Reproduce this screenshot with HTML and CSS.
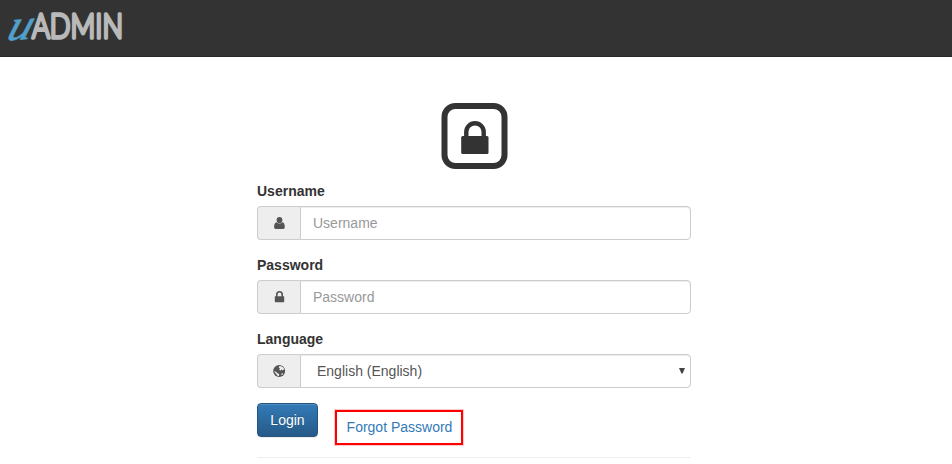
FILE: index.html
```html
<!DOCTYPE html>
<html lang="en">
<head>
<meta charset="utf-8">
<title>uAdmin</title>
<link rel="stylesheet" href="styles.css">
</head>
<body>
<header class="navbar">
  <svg class="logo" width="132" height="56" viewBox="0 0 132 56" role="img" aria-label="uAdmin">
    <text class="logo-u" transform="translate(5.5 40.5) rotate(-4) skewX(-22) scale(1.12 1)" x="0" y="0">u</text>
    <text class="logo-name" x="32" y="38.3" textLength="91" lengthAdjust="spacingAndGlyphs">ADMIN</text>
  </svg>
</header>
<main class="login">
  <svg class="lock" width="67" height="66" viewBox="0 0 67 66">
    <rect x="3.5" y="3" width="60" height="60" rx="11" fill="none" stroke="#333" stroke-width="6"/>
    <path d="M25.3 34v-5.2a8.7 8.5 0 0 1 17.4 0V34" fill="none" stroke="#333" stroke-width="4.4"/>
    <rect x="20.2" y="33" width="27.3" height="18" rx="1.5" fill="#333"/>
  </svg>
  <form>
    <div class="group">
      <label for="username">Username</label>
      <div class="field">
        <span class="addon"><svg width="14" height="14" viewBox="0 0 14 14" fill="#555"><ellipse cx="7.5" cy="4" rx="2.9" ry="3.1"/><path d="M4.7 6.2C2.8 6.7 2.1 8.3 2.1 11c0 1.3.6 2 1.6 2h7.5c1 0 1.6-.7 1.6-2 0-2.7-.7-4.3-2.5-4.8-1.6 1.6-4 1.6-5.6 0z"/></svg></span>
        <input id="username" type="text" placeholder="Username">
      </div>
    </div>
    <div class="group">
      <label for="password">Password</label>
      <div class="field">
        <span class="addon"><svg width="14" height="14" viewBox="0 0 14 14"><path d="M4.8 7V4.4a2.7 2.7 0 0 1 5.4 0V7" fill="none" stroke="#555" stroke-width="1.6"/><rect x="2.8" y="6.2" width="9.4" height="6" rx=".6" fill="#555"/></svg></span>
        <input id="password" type="password" placeholder="Password">
      </div>
    </div>
    <div class="group">
      <label for="language">Language</label>
      <div class="field">
        <span class="addon"><svg width="14" height="14" viewBox="0 0 14 14"><circle cx="7.2" cy="7" r="6" fill="#555"/><path d="M7.1 2.2l2.3.1 2.1 1.5 1 2-1.3-.2-.4 1-1.1-1-1.2 1-1.3-.7.8-1.4-1.2-.8zM2 7.2l2 .5 1.8 1.8 1.4.5-.3 2.1-1.4-.4-1.5-2zM9.2 9.9l1.6-1 .2 1.2-1.2 1.2z" fill="#eee"/></svg></span>
        <div class="select">
          <select id="language"><option>English (English)</option></select>
          <svg class="arrow" width="6" height="6" viewBox="0 0 6 6"><path d="M0 0h6L3.6 5.6H2.4z" fill="#444"/></svg>
        </div>
      </div>
    </div>
    <div class="actions">
      <button class="submit" type="button">Login</button>
      <a class="forgot" href="#">Forgot Password</a>
    </div>
  </form>
  <hr>
</main>
</body>
</html>
```
FILE: styles.css
```css
* { box-sizing: border-box; }
body {
  margin: 0;
  background: #fff;
  color: #333;
  font: 14px/20px "Liberation Sans", Arial, sans-serif;
  overflow: hidden;
}
.navbar { height: 57px; background: #333; border-bottom: 1px solid #292929; }
.logo { display: block; overflow: visible; }
.logo-u {
  font: italic 43px "Liberation Serif", serif;
  fill: #519fcb;
  stroke: #519fcb;
  stroke-width: .7;
}
.logo-name {
  font: 300 32.5px Lato, sans-serif;
  fill: #b9b9b9;
  stroke: #b9b9b9;
  stroke-width: 3.4;
  stroke-linejoin: round;
}
.login { width: 434px; margin: 46px 0 0 257px; }
.lock { display: block; margin: 0 auto 12px; }
.group { margin-bottom: 15px; }
label { display: block; margin-bottom: 5px; font-weight: 700; }
.field { display: flex; height: 34px; }
.addon {
  width: 43px;
  display: flex;
  align-items: center;
  justify-content: center;
  background: #eee;
  border: 1px solid #ccc;
  border-right: 0;
  border-radius: 4px 0 0 4px;
}
input, .select {
  flex: 1;
  min-width: 0;
  border: 1px solid #ccc;
  border-radius: 0 4px 4px 0;
  background: #fff;
  box-shadow: inset 0 1px 1px rgba(0, 0, 0, .075);
}
input { padding: 6px 12px; font: inherit; color: #555; }
input::placeholder { color: #999; opacity: 1; }
.select { display: flex; align-items: center; padding-right: 5px; }
select {
  flex: 1;
  height: 32px;
  padding: 0 16px;
  border: 0;
  background: transparent;
  appearance: none;
  font: inherit;
  color: #555;
}
.actions { display: flex; align-items: flex-start; height: 54px; }
.submit {
  width: 61px;
  height: 34px;
  padding: 0;
  border: 1px solid #245580;
  border-radius: 4px;
  background: linear-gradient(#337ab7, #265a88);
  box-shadow: inset 0 1px 0 rgba(255, 255, 255, .15), 0 1px 1px rgba(0, 0, 0, .075);
  color: #fff;
  font: inherit;
  text-shadow: 0 -1px 0 rgba(0, 0, 0, .2);
}
.forgot {
  width: 128px;
  height: 35px;
  margin: 7px 0 0 17px;
  padding-left: 1px;
  border: 2px solid #f00;
  box-shadow: 0 0 0 1px rgba(255, 0, 0, .2);
  color: #337ab7;
  line-height: 31px;
  text-align: center;
  text-decoration: none;
}
hr { margin: 0; border: 0; border-top: 1px solid #eee; }
```
